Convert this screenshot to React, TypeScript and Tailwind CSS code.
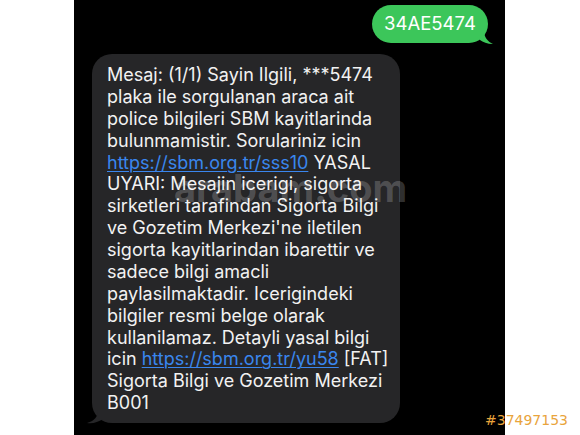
import React from "react";

const lines: React.ReactNode[] = [
  "Mesaj: (1/1) Sayin Ilgili, ***5474",
  "plaka ile sorgulanan araca ait",
  "police bilgileri SBM kayitlarinda",
  "bulunmamistir. Sorulariniz icin",
  <>
    <span className="text-[#3a86ee] underline decoration-1 underline-offset-2">https://sbm.org.tr/sss10</span> YASAL
  </>,
  "UYARI: Mesajin icerigi, sigorta",
  "sirketleri tarafindan Sigorta Bilgi",
  "ve Gozetim Merkezi'ne iletilen",
  "sigorta kayitlarindan ibarettir ve",
  "sadece bilgi amacli",
  "paylasilmaktadir. Icerigindeki",
  "bilgiler resmi belge olarak",
  "kullanilamaz. Detayli yasal bilgi",
  <>
    icin <span className="text-[#3a86ee] underline decoration-1 underline-offset-2">https://sbm.org.tr/yu58</span> [FAT]
  </>,
  "Sigorta Bilgi ve Gozetim Merkezi",
  "B001",
];

export default function App() {
  return (
    <div
      className="relative w-[580px] h-[435px] bg-white overflow-hidden"
      style={{ fontFamily: "Inter, 'Liberation Sans', sans-serif" }}
    >
      <div className="ml-[74px] w-[431px] h-[435px] bg-black flex flex-col pt-[5px]">
        <div className="flex justify-end pr-[17px]">
          <div className="relative h-[38px] w-[116px] rounded-[19px] bg-[#3cc65a] flex items-center justify-center text-white text-[18.5px]">
            34AE5474
            <svg className="absolute right-[-6px] bottom-[-2px]" width="14" height="14" viewBox="0 0 14 14">
              <path d="M0 0 L4 0 C4 6 8 11 13 13 C7 13 3 11 0 9 Z" fill="#3cc65a" />
            </svg>
          </div>
        </div>
        <div className="ml-[18px] mt-[11px] relative w-[308px] rounded-[20px] bg-[#262628] pl-[15px] pr-[6px] pt-[10px] pb-[9px] text-[#f2f2f2] text-[18px] leading-[21.87px]">
          {lines.map((l, i) => (
            <div key={i} className="whitespace-nowrap">
              {l}
            </div>
          ))}
          <svg className="absolute left-[-5px] bottom-[-1px]" width="16" height="14" viewBox="0 0 16 14">
            <path d="M16 0 L11 0 C11 6 8 11 0 13 C6 14 11 12 16 9 Z" fill="#262628" />
          </svg>
          <div className="absolute left-[82px] top-[114px] text-[38px] leading-[40px] font-bold text-white/[0.2] whitespace-nowrap pointer-events-none">
            arabam.com
          </div>
        </div>
      </div>
      <div
        className="absolute left-[485px] top-[410px] text-[14px] text-[#e9a43c] whitespace-nowrap"
        style={{ fontFamily: "'DejaVu Sans', sans-serif" }}
      >
        #37497153
      </div>
    </div>
  );
}
